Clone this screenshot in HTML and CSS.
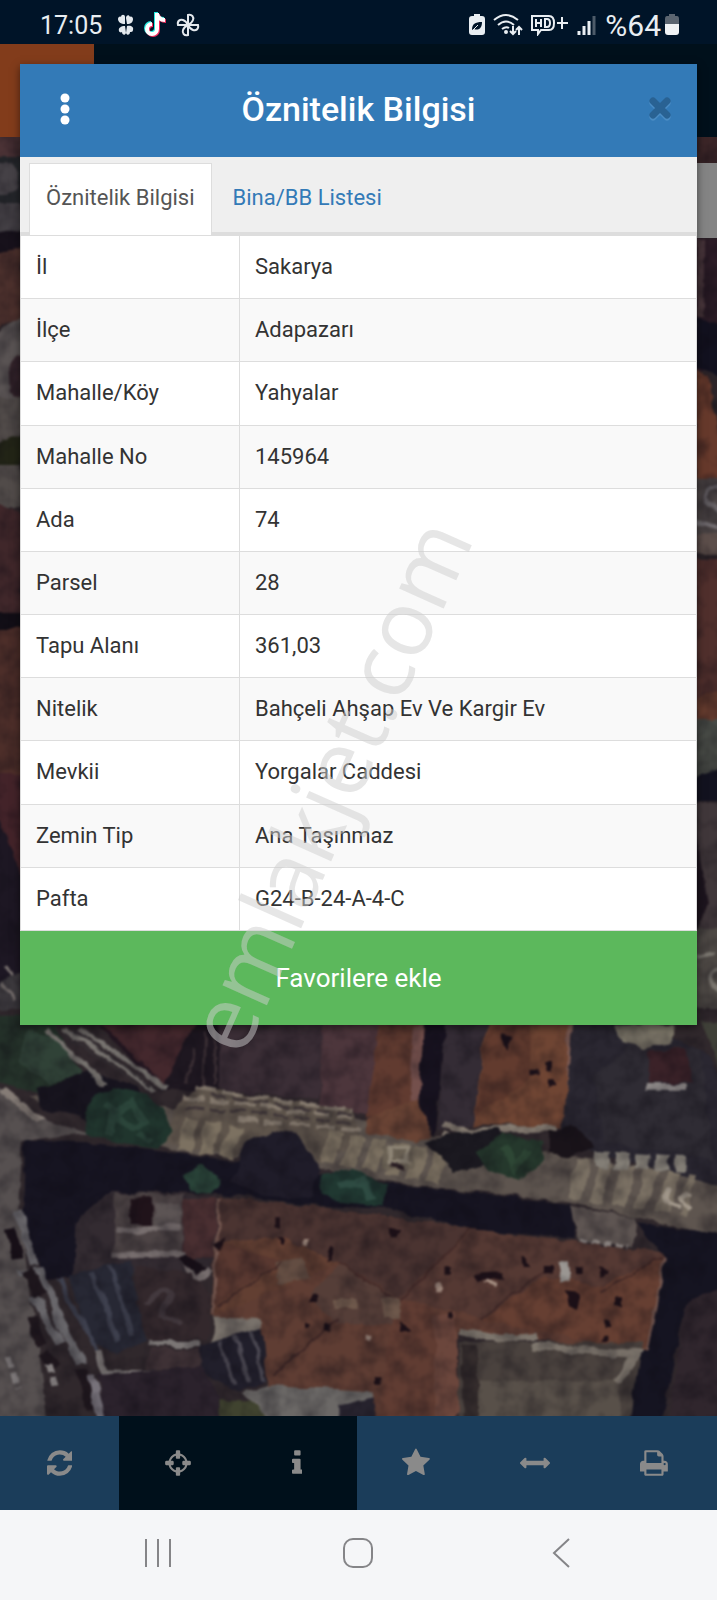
FILE: index.html
```html
<!DOCTYPE html>
<html lang="tr">
<head>
  <meta charset="UTF-8">
  <meta name="viewport" content="width=device-width, initial-scale=1.0">
  <title>Öznitelik Bilgisi</title>
  <link rel="stylesheet" href="styles.css">
</head>
<body>
  <!-- Status Bar -->
  <header class="status-bar">
    <div class="status-group">
      <span class="clock">17:05</span>
      <svg width="20" height="24" viewBox="0 0 20 24" fill="#e4e9ee">
        <path d="M9 11C5 11 2 9 2 6c0-2 2-3 3-2 0-3 4-3 4 0zM11 11c4 0 6-2 6-5 0-2-2-3-3-2-1-3-4-2-4 1zM9 13c-4 0-7 2-6 5 0 1 2 2 3 1 0 3 3 4 4 1zM11 13c4-1 7 1 6 4 0 2-2 2-3 2 0 3-3 4-4 1z"/>
      </svg>
      <svg width="24" height="28" viewBox="0 0 24 28" fill="none" stroke-width="4">
        <path d="M13 2v16a5 5 0 1 1-5-5M13 3c1 4 4 6 8 6" stroke="#25e8df" transform="translate(-1 -1)"/>
        <path d="M13 2v16a5 5 0 1 1-5-5M13 3c1 4 4 6 8 6" stroke="#f02c5c" transform="translate(1 1)"/>
        <path d="M13 2v16a5 5 0 1 1-5-5M13 3c1 4 4 6 8 6" stroke="#fff"/>
      </svg>
      <svg width="24" height="24" viewBox="0 0 24 24" fill="none" stroke="#e4e9ee" stroke-width="2">
        <path d="M12 12V2c4-1 6 2 5 5-1 3-3 4-5 5zM12 12h10c1 4-2 6-5 5-3-1-4-3-5-5zM12 12v10c-4 1-6-2-5-5 1-3 3-4 5-5zM12 12H2C1 8 4 6 7 7c3 1 4 3 5 5z"/>
      </svg>
    </div>
    <div class="status-group">
      <svg width="16" height="22" viewBox="0 0 16 22">
        <path d="M5 0h6v2h2q3 0 3 3v13q0 3-3 3H3q-3 0-3-3V5q0-3 3-3h2z" fill="#e9eef2"/>
        <path d="M3 16c0-6 3-8 10-8 0 6-3 9-8 7z" fill="#001428"/>
        <path d="M4 16l5-5" stroke="#e9eef2"/>
      </svg>
      <svg width="30" height="24" viewBox="0 0 30 24" fill="none" stroke="#e9eef2" stroke-width="2">
        <path d="M1 7Q13-3 25 7M5 12q8-7 16 0M9 16q4-3 7-1"/>
        <circle cx="13" cy="19" r="1"/>
        <path d="M20 13v8M17 18l3 3 3-3M26 22v-8M23 17l3-3 3 3"/>
      </svg>
      <svg width="38" height="22" viewBox="0 0 38 22" fill="none" stroke="#e9eef2" stroke-width="2">
        <path d="M1 2h17q5 0 5 7t-5 7h-8l-3 4v-4H1z"/>
        <path d="M5 5v8M10 5v8M5 9h5M14 5v8h2q3 0 3-4t-3-4zM26 9h11M31 3v12" stroke-width="2"/>
      </svg>
      <svg width="20" height="22" viewBox="0 0 20 22" stroke="#e9eef2" stroke-width="3">
        <path d="M2 17v4M7 12v9M12 7v14"/>
        <path d="M17 2v19" stroke="#4d5b69"/>
      </svg>
      <span class="battery-text">%64</span>
      <svg width="14" height="22" viewBox="0 0 14 22">
        <path d="M4 0h6v2h2q2 0 2 3v5H0V5q0-3 2-3h2z" fill="#5b6570"/>
        <path d="M0 10h14v8q0 3-3 3H3q-3 0-3-3z" fill="#f0f3f5"/>
      </svg>
    </div>
  </header>

  <main class="stage">
    <!-- App behind the dialog -->
    <div class="app-header"><div class="app-logo"></div></div>
    <div class="map">
      <svg class="map-image" viewBox="0 137 717 1280" preserveAspectRatio="xMidYMax slice">
        <defs>
          <!-- roughens the edges and adds a little mottling -->
          <filter id="aerial" x="0" y="0" width="100%" height="100%" color-interpolation-filters="sRGB">
            <feTurbulence type="fractalNoise" baseFrequency="0.05" numOctaves="3" seed="4" result="noise"/>
            <feDisplacementMap in="SourceGraphic" in2="noise" scale="9" xChannelSelector="R" yChannelSelector="G" result="rough"/>
            <feColorMatrix in="noise" type="matrix" values="0 0 0 0 0.05  0 0 0 0 0.04  0 0 0 0 0.07  0.8 0 0 0 -0.3" result="mottle"/>
            <feMerge result="merged">
              <feMergeNode in="rough"/>
              <feMergeNode in="mottle"/>
            </feMerge>
            <feGaussianBlur in="merged" stdDeviation="1.2"/>
          </filter>
        </defs>
        <rect y="137" width="717" height="1280" fill="#2c2428"/>
        <g filter="url(#aerial)">
          <rect x="-20" y="117" width="757" height="1320" fill="#2c2428"/>
          <!-- left edge -->
          <rect x="-10" y="127" width="32" height="30" fill="#4b3235"/>
          <rect x="-10" y="157" width="32" height="76" fill="#24262a"/>
          <path d="M-10 165h22l8 20-12 10h-18zM-10 205h32v30h-32z" fill="#454146"/>
          <path d="M-10 236l32-6v20l-32 6z" fill="#17111b"/>
          <path d="M-10 256l32-6v70l-32 14z" fill="#4c302c"/>
          <path d="M-10 340l32-22v80h-32z" fill="#595353"/>
          <path d="M10 360l12-4v46l-10-8z" fill="#35242b"/>
          <path d="M-10 398h32v110h-32z" fill="#514b49"/>
          <path d="M-10 445l32-8v30h-32z" fill="#222416"/>
          <path d="M-10 500l32 15v100h-32z" fill="#40272a"/>
          <path d="M-10 614h32v16h-32z" fill="#120e16"/>
          <path d="M-10 630h32v145h-32z" fill="#4d2e29"/>
          <path d="M-10 775h32v105l-32-80z" fill="#432329"/>
          <path d="M-10 800l32 80v150h-32z" fill="#1d1723"/>
          <path d="M-10 990l32-20v60h-32z" fill="#3c393d"/>
          <path d="M3 967l9 9M2 985l13 17" stroke="#77706e" stroke-width="3"/>
          <!-- right edge -->
          <rect x="695" y="127" width="32" height="40" fill="#3b2527"/>
          <path d="M695 238h32v135h-32z" fill="#2c1c26"/>
          <path d="M697 240h8v78h-8z" fill="#49363b"/>
          <path d="M695 318l32 8v55l-32-12z" fill="#12111f"/>
          <path d="M695 370l14 10 18 100h-32z" fill="#66392b"/>
          <path d="M695 480h32v60h-32z" fill="#4c4545"/>
          <path d="M722 488q-20 4-12 18l12 8M695 522l30 10" stroke="#777275" stroke-width="4" fill="none"/>
          <path d="M695 535h32v20h-32z" fill="#5c4e4a"/>
          <path d="M695 560h32v160h-32z" fill="#502f2c"/>
          <path d="M695 700l32-8v30h-32z" fill="#633a2d"/>
          <path d="M695 720h32v60h-32z" fill="#474a45"/>
          <path d="M695 778l32-10v35h-32z" fill="#12121f"/>
          <path d="M695 805h32v125h-32z" fill="#40373a"/>
          <path d="M695 825l12 80-12 35z" fill="#1c141d"/>
          <path d="M695 930h32v120h-32z" fill="#4d4844"/>
          <path d="M722 970q-22 10 0 22M697 958l16-4" stroke="#79756e" stroke-width="4" fill="none"/>

          <!-- neighbourhood under the dialog -->
          <g transform="translate(0 1010) scale(.4573 .3333)">
            <path d="M-30 0h1628v1270H-30z" fill="#30282c"/>
            <path d="M-30 210L70 320l130 50-150 25-10 200 70 675H-30z" fill="#565050"/>
            <path d="M60 260l330 170 210 20 260 70 380 60 358 105V510l-360-70-288-60-200-60-310-80-60 60z" fill="#5e554f"/>
            <path d="M-30 20h140l70 180-60 70L-30 210z" fill="#25332a"/>
            <path d="M60 60l80 40 40 100-70 20-70-60z" fill="#304237"/>
            <path d="M80 240l110-50 110 40 20 60-130 40-100-30z" fill="#17141e"/>
            <!-- upper roofs -->
            <path d="M210 30h225l-15 160-60 45z" fill="#44282d"/>
            <path d="M220 50l140 185" stroke="#241721" stroke-width="10"/>
            <path d="M435 30h45v220h-80l-50-10z" fill="#1e1720"/>
            <path d="M425 120l-20 110M450 70l-5 170M470 60v170" stroke="#3c3035" stroke-width="6"/>
            <path d="M480 30h230l-12 240-218-30z" fill="#3b2e36"/>
            <path d="M705 30h125l-12 290-118-30z" fill="#4d363c"/>
            <path d="M830 30h100l-12 300-118-5z" fill="#613b30"/>
            <path d="M905 50h22l-10 230h-22z" fill="#74504c"/>
            <path d="M800 330l115-60 35 110-40 20-110-30z" fill="#694334"/>
            <path d="M928 30h45l-20 350-38-100z" fill="#17121f"/>
            <path d="M972 30h100l-30 310-85 30z" fill="#342c35"/>
            <path d="M1065 30h185v330l-215-15z" fill="#6f4533"/>
            <path d="M1065 60l95-10v160l-120 110z" fill="#623b2e"/>
            <path d="M1238 50h14v310h-14z" fill="#7b5a52"/>
            <path d="M1095 75l30 8-16 40zM1160 182h18v20h-18zM1195 162h14v22h-14zM1196 208h16v24h-16z" fill="#1c1119"/>
            <path d="M1250 30h140l150 100 58 110v300l-310-115-60 10z" fill="#2a2731"/>
            <path d="M1300 200l80-90 150 10 30 330-240-50z" fill="#2f2c34"/>
            <path d="M1420 120h80l20 100h-105z" fill="#3b2228"/>
            <path d="M1345 45h125v60h-40l-18 15-52-15z" fill="#7d7769"/>
            <path d="M1410 232h92" stroke="#8d8887" stroke-width="20"/>
            <path d="M1530 40h68v220z" fill="#3f4038"/>

            <!-- balconies and stairs -->
            <path d="M100 60l130 170M140 55l200 190M175 60l190 175" stroke="#77736f" stroke-width="13" fill="none"/>
            <path d="M120 55l190 180M160 60l170 170" stroke="#332d31" stroke-width="6" fill="none"/>
            <path d="M0 240l90 95" stroke="#857c76" stroke-width="20"/>
            <path d="M390 280l50-40 330 60 20 90-90 70-150-15-190-45z" fill="#5e544b"/>
            <path d="M400 265l370 60M430 240l340 65M520 330l270 35" stroke="#857a6e" stroke-width="13" stroke-dasharray="45 12"/>
            <path d="M410 290l370 55M460 260l310 60" stroke="#3f3638" stroke-width="7" stroke-dasharray="35 12"/>
            <path d="M395 375l140 30M710 410l260 65" stroke="#7c7161" stroke-width="95" stroke-dasharray="32 16"/>
            <path d="M835 410h70v65h-70z" fill="#6a6154"/>
            <path d="M850 415h40v40h-40z" fill="none" stroke="#8d8475" stroke-width="10"/>
            <path d="M850 462l35 10" stroke="#281c22" stroke-width="12"/>
            <path d="M970 350l60 15 190-5M980 375l-20 30" stroke="#887e73" stroke-width="20" fill="none"/>
            <path d="M1250 510l260 50" stroke="#7a7063" stroke-width="125" stroke-dasharray="30 20"/>
            <path d="M1300 450l200 15" stroke="#837e76" stroke-width="48" stroke-dasharray="32 12"/>
            <path d="M1465 540q-30 40 20 60M1510 550q-40 20-5 50" stroke="#a2988b" stroke-width="13" fill="none"/>

            <!-- street shadow -->
            <path d="M55 395l135 5 150 25 200 35 160 35 160 30 385 60 10 105-225-30-190-60-140-10-220-35-230-5-80 105-10 150-60 5-50-165z" fill="#161421"/>
            <path d="M1390 640l208 36v170l-100 50-55 374h-75l75-534z" fill="#151421"/>
            <path d="M1245 590l145 35-8 90-120-20z" fill="#5e5552"/>
            <path d="M1270 695l105 18" stroke="#918985" stroke-width="12" stroke-dasharray="16 10"/>

            <!-- trees -->
            <path d="M195 270l60-35 70 20 35 55 15 60-30 50-80-15-80-35z" fill="#20352d"/>
            <path d="M230 280l30 30 25-30 30 60-30 15-35-35-10 60M300 370l35 25" stroke="#2b453a" stroke-width="18" fill="none"/>
            <path d="M540 400l50-35 60 10 45 90-10 105-110-10-70-40z" fill="#1f1c29"/>
            <path d="M700 495l70-15 80 50-15 65-100-15-30-30z" fill="#203831"/>
            <path d="M735 535l60-20 15 55" stroke="#2e4b42" stroke-width="22" fill="none"/>
            <path d="M400 500l40-30 45 45-25 40-45-10z" fill="#294338"/>
            <path d="M930 400l70-30 90-10 30 90-130 45-15-40z" fill="#1b1920"/>
            <path d="M1040 430l60-55 85 20 5 60-60 60-60-30z" fill="#25382c"/>
            <path d="M1100 410l25 70 30-60" stroke="#2e4735" stroke-width="20" fill="none"/>
            <path d="M1200 370l60-15 40 60-60 30-40-10z" fill="#191319"/>

            <!-- lower left houses -->
            <path d="M165 640l80-95 230 20-5 220-310 15z" fill="#332b31"/>
            <path d="M250 550l150 10v170l-150 20z" fill="#4d4445"/>
            <path d="M285 565h45v80h-40z" fill="#20131a"/>
            <path d="M335 580h60v70l-60 20z" fill="#5c5454"/>
            <path d="M400 570h75l-8 175-65 5z" fill="#4a2f31"/>
            <path d="M255 665l40 5 20-15 80 5M250 740l150-5 30 80 30-30" stroke="#776e6e" stroke-width="18" fill="none"/>
            <path d="M400 740l40 50M20 660l20 90" stroke="#170f17" stroke-width="24"/>
            <path d="M150 800l130-45 45 240-70 40-60-40z" fill="#272834"/>
            <path d="M200 790l60 210M240 770l50 210M130 810l90 240" stroke="#3e404e" stroke-width="11"/>
            <path d="M290 775l130 15 40 70-10 130-130 5z" fill="#33282c"/>
            <path d="M320 880q30-60 55-20l-20 60 40 20" stroke="#43393e" stroke-width="16" fill="none"/>
            <path d="M465 925h115l-10 50-110 40z" fill="#79726b"/>
            <path d="M325 1005h115M215 1030l15 60 150 5" stroke="#7b7675" stroke-width="18" fill="none"/>
            <path d="M330 1020h110v60H320z" fill="#3e3135"/>
            <path d="M440 1010l140-60 10 160-70 40-80-60z" fill="#211f2b"/>
            <path d="M480 1000l35 130M515 980l30 140M550 965l25 150" stroke="#4b4852" stroke-width="9"/>
            <path d="M40 600l35 170M40 790l50-5 50 180 40 100M75 860l60 150" stroke="#69676b" stroke-width="20" fill="none"/>
            <path d="M60 780l30 80M70 920l20 90M180 1080l20 120M95 1030l25 40" stroke="#1f171d" stroke-width="26"/>
            <path d="M20 1050l20 90M105 1060l15 70" stroke="#878282" stroke-width="15" stroke-dasharray="30 15"/>
            <path d="M215 1095l225-20 90 195H230z" fill="#2b222c"/>
            <path d="M200 1100l25 150" stroke="#77727a" stroke-width="18"/>
            <path d="M480 1170l120 10v90H480z" fill="#40432f"/>
            <path d="M530 1150l70-30 230 30-20 120H610z" fill="#6b6866"/>
            <path d="M740 1190l90-30v110h-90z" fill="#28242f"/>

            <!-- lower roofs -->
            <path d="M480 565l220 30 330 65 425 75-40 295-415-65-10 305H830l-15-120-230-20-15-200-105-5z" fill="#5f3d33"/>
            <path d="M480 565l220 30 330 65-160 210-130-110-265 135z" fill="#4b3431"/>
            <path d="M470 700l150-15 120 75-280 165z" fill="#623f32"/>
            <path d="M465 895l150-140-140-60z" fill="#593830"/>
            <path d="M740 765l130 105-15 80-120-10-60-80z" fill="#553e38"/>
            <path d="M600 760l60-15 20 60-70 20z" fill="#634d42"/>
            <path d="M1030 660l425 75-140 110-260 85-80-30-105-30z" fill="#553933"/>
            <path d="M1190 800l120 30 145-90-40 290-360-100z" fill="#663f32"/>
            <path d="M870 870l70 30 60 50-45 320H830l20-290z" fill="#603c32"/>
            <path d="M950 920l45-10 10 300-55 60z" fill="#6b463c"/>
            <path d="M1030 660L870 880M740 760l130 120M1190 785l-140 145M1455 740l-140 105M740 930L600 1100M475 895l140-135" stroke="#432a28" stroke-width="5"/>
            <path d="M480 570l-15 350M1455 740l-40 290" stroke="#755850" stroke-width="7"/>
            <path d="M600 625h12v28h-12zM850 650l25 10-8 25h-15zM720 710l12 8-8 32h-10zM470 700l26-15-15 35zM610 685h8v25h-8zM680 860h14v16h-14zM715 945h12v20h-12zM665 945h12v14h-12zM875 940l25 30-28 5zM1140 735l18 45h-15zM1185 765h20v25h-20zM1260 775h14v20h-14zM1310 775l22 10-18 22zM1345 865h15v30h-15zM1235 850l35 5-8 50-20-10zM1322 935h14v22h-14zM1315 980h11v16h-11zM970 775h14v22h-14zM1035 795l60-5 10 20-60 10zM820 1105h14v22h-14zM978 910h10v16h-10z" fill="#1c1017"/>
            <path d="M1218 760h24l4 60-18 6z" fill="#9a9692"/>
            <path d="M1060 820l25 15M960 820v30M670 690v20M808 980v16" stroke="#a48d80" stroke-width="12"/>
            <path d="M725 870h55v30h-50zM835 870h40v60h-35z" fill="#6e584b"/>
            <path d="M1005 1000h400l-30 270h-375z" fill="#4a423e"/>
            <path d="M1045 1115h310v155h-310z" fill="#585049"/>
            <path d="M1010 1010h35v260h-30z" fill="#342c2c"/>
            <path d="M1005 965l90 25 80-10M1160 1010l230 25-40 90" stroke="#7d756c" stroke-width="24" fill="none"/>
            <path d="M1500 880l98-60v450h-140z" fill="#30262d"/>
          </g>
        </g>
      </svg>
      <div class="map-widget"></div>
    </div>

    <nav class="toolbar">
      <button aria-label="Yenile"><svg viewBox="0 0 1536 1792"><path d="M1511 1056q0 5-1 7-64 268-268 434.500T764 1664q-146 0-282.500-55T238 1452l-129 129q-19 19-45 19t-45-19-19-45v-448q0-26 19-45t45-19h448q26 0 45 19t19 45-19 45l-137 137q71 66 161 102t187 36q134 0 250-65t186-179q11-17 53-117 8-23 30-23h192q13 0 22.500 9.500t9.500 22.500zm25-800v448q0 26-19 45t-45 19h-448q-26 0-45-19t-19-45 19-45l138-138Q969 384 768 384q-134 0-250 65T332 628q-11 17-53 117-8 23-30 23H50q-13 0-22.500-9.500T18 736v-7q65-268 270-434.500T768 128q146 0 284 55.500T1297 340l130-129q19-19 45-19t45 19 19 45z"/></svg></button>
      <button class="dark" aria-label="Konum"><svg viewBox="0 0 1792 1792"><path d="M1325 1024h-109q-26 0-45-19t-19-45v-128q0-26 19-45t45-19h109q-32-108-112.500-188.500T1024 467v109q0 26-19 45t-45 19H832q-26 0-45-19t-19-45V467q-108 32-188.500 112.500T467 768h109q26 0 45 19t19 45v128q0 26-19 45t-45 19H467q32 108 112.500 188.500T768 1325v-109q0-26 19-45t45-19h128q26 0 45 19t19 45v109q108-32 188.500-112.500T1325 1024zm339-192v128q0 26-19 45t-45 19h-143q-37 161-154.500 278.500T1024 1457v143q0 26-19 45t-45 19H832q-26 0-45-19t-19-45v-143q-161-37-278.500-154.500T335 1024H192q-26 0-45-19t-19-45V832q0-26 19-45t45-19h143q37-161 154.500-278.500T768 335V192q0-26 19-45t45-19h128q26 0 45 19t19 45v143q161 37 278.500 154.500T1457 768h143q26 0 45 19t19 45z"/></svg></button>
      <button class="dark" aria-label="Bilgi"><svg viewBox="0 0 640 1792"><path d="M640 1344v128q0 26-19 45t-45 19H64q-26 0-45-19t-19-45v-128q0-26 19-45t45-19h64V896H64q-26 0-45-19t-19-45V704q0-26 19-45t45-19h384q26 0 45 19t19 45v576h64q26 0 45 19t19 45zM512 192v192q0 26-19 45t-45 19H192q-26 0-45-19t-19-45V192q0-26 19-45t45-19h256q26 0 45 19t19 45z"/></svg></button>
      <button aria-label="Favoriler"><svg viewBox="0 0 1664 1792"><path d="M1664 647q0 22-26 48l-363 354 86 500q1 7 1 20 0 21-10.500 35.500T1321 1619q-19 0-40-12l-449-236-449 236q-22 12-40 12-21 0-31.500-14.500T301 1569q0-6 2-20l86-500L25 695Q0 668 0 647q0-37 56-46l502-73L783 73q19-41 49-41t49 41l225 455 502 73q56 9 56 46z"/></svg></button>
      <button aria-label="Ölçüm"><svg viewBox="0 0 1792 1792"><path d="M1792 896q0 26-19 45l-256 256q-19 19-45 19t-45-19-19-45v-128H384v128q0 26-19 45t-45 19-45-19L19 941q-19-19-19-45t19-45l256-256q19-19 45-19t45 19 19 45v128h1024V640q0-26 19-45t45-19 45 19l256 256q19 19 19 45z"/></svg></button>
      <button aria-label="Yazdır"><svg viewBox="0 0 1664 1792"><path d="M384 1536h896v-256H384v256zm0-640h896V512h-160q-40 0-68-28t-28-68V256H384v640zm1152 64q0-26-19-45t-45-19-45 19-19 45 19 45 45 19 45-19 19-45zm128 0v416q0 13-9.500 22.500t-22.500 9.500h-224v160q0 40-28 68t-68 28H352q-40 0-68-28t-28-68v-160H32q-13 0-22.500-9.500T0 1376V960q0-79 56.500-135.500T192 768h64V224q0-40 28-68t68-28h672q40 0 88 20t76 48l152 152q28 28 48 76t20 88v256h64q79 0 135.500 56.500T1664 960z"/></svg></button>
    </nav>

    <!-- Dialog -->
    <section class="modal" role="dialog" aria-labelledby="modal-title">
      <div class="modal-header">
        <button class="menu-btn" aria-label="Menü">
          <svg width="10" height="32" viewBox="0 0 10 32" fill="#fff"><circle cx="5" cy="5" r="4.500"/><circle cx="5" cy="16" r="4.500"/><circle cx="5" cy="27" r="4.500"/></svg>
        </button>
        <h1 id="modal-title">Öznitelik Bilgisi</h1>
        <button class="close-btn" aria-label="Kapat">
          <svg width="24" height="26" viewBox="0 0 24 26" stroke-width="7" stroke-linecap="round"><path d="M5 7l14 14M19 7L5 21" stroke="#4a8cc4"/><path d="M5 5l14 14M19 5L5 19" stroke="#296293"/></svg>
        </button>
      </div>
      <nav class="tabs">
        <a class="tab active" href="#oznitelik">Öznitelik Bilgisi</a>
        <a class="tab" href="#bina">Bina/BB Listesi</a>
      </nav>
      <table class="info-table" id="oznitelik">
        <tr><th scope="row">İl</th><td>Sakarya</td></tr>
        <tr><th scope="row">İlçe</th><td>Adapazarı</td></tr>
        <tr><th scope="row">Mahalle/Köy</th><td>Yahyalar</td></tr>
        <tr><th scope="row">Mahalle No</th><td>145964</td></tr>
        <tr><th scope="row">Ada</th><td>74</td></tr>
        <tr><th scope="row">Parsel</th><td>28</td></tr>
        <tr><th scope="row">Tapu Alanı</th><td>361,03</td></tr>
        <tr><th scope="row">Nitelik</th><td>Bahçeli Ahşap Ev Ve Kargir Ev</td></tr>
        <tr><th scope="row">Mevkii</th><td>Yorgalar Caddesi</td></tr>
        <tr><th scope="row">Zemin Tip</th><td>Ana Taşınmaz</td></tr>
        <tr><th scope="row">Pafta</th><td>G24-B-24-A-4-C</td></tr>
      </table>
      <button class="favorite-btn">Favorilere ekle</button>
    </section>
  </main>

  <!-- Phone Navigation -->
  <nav class="phone-nav">
    <button aria-label="Son uygulamalar"><svg width="32" height="32" viewBox="0 0 32 32"><path d="M4 2v28M16 2v28M28 2v28"/></svg></button>
    <button aria-label="Ana ekran"><svg width="32" height="32" viewBox="0 0 32 32"><rect x="2" y="2" width="28" height="28" rx="9"/></svg></button>
    <button aria-label="Geri"><svg width="32" height="32" viewBox="0 0 32 32"><path d="M26 2L11 16l15 14"/></svg></button>
  </nav>

  <!-- Watermark -->
  <svg class="watermark" viewBox="0 0 717 1600" aria-hidden="true">
    <text x="243" y="1059" transform="rotate(-66 243 1059)">emlakjet.com</text>
  </svg>
</body>
</html>
```
FILE: styles.css
```css
/* General Styles */
* {
  box-sizing: border-box;
}

body {
  font-family: Roboto, 'Liberation Sans', sans-serif;
  font-size: 22px;
  color: #333;
  margin: 0;
  min-height: 100vh;
  display: flex;
  flex-direction: column;
  position: relative;
}

button {
  font-family: inherit;
  border: none;
  padding: 0;
  background: none;
  cursor: pointer;
  display: flex;
  justify-content: center;
  align-items: center;
}

svg {
  display: block;
}

/* Status Bar */
.status-bar {
  height: 44px;
  padding: 6px 38px 0 40px;
  background: #001428;
  color: #e9eef2;
  display: flex;
  justify-content: space-between;
  align-items: center;
}

.status-group {
  display: flex;
  align-items: center;
  gap: 8px;
}

.clock {
  font-size: 25px;
  margin-right: 6px;
}

.battery-text {
  font-size: 30px;
  margin-right: -4px;
}

/* App */
.stage {
  flex: 1;
  display: flex;
  flex-direction: column;
  position: relative;
}

.app-header {
  height: 93px;
  background: #00101b;
}

.app-logo {
  width: 94px;
  height: 100%;
  background: #823c1b;
}

.map {
  flex: 1 0 1000px;
  position: relative;
  overflow: hidden;
}

.map-image {
  position: absolute;
  width: 100%;
  height: 100%;
}

.map-widget {
  position: absolute;
  top: 26px;
  right: 0;
  width: 40px;
  height: 75px;
  background: #848484;
}

/* Toolbar */
.toolbar {
  height: 94px;
  padding-right: 4px;
  display: grid;
  grid-template-columns: repeat(6, 1fr);
  background: #1b3d5a;
}

.toolbar .dark {
  background: #00101b;
}

.toolbar svg {
  height: 30px;
  fill: #8a8a8a;
}

/* Modal */
.modal {
  position: absolute;
  top: 20px;
  left: 20px;
  right: 20px;
  background: #fff;
  box-shadow: 0 3px 8px rgba(0, 0, 0, 0.5);
}

.modal-header {
  display: grid;
  grid-template-columns: 66px 1fr 66px;
  align-items: center;
  height: 93px;
  padding: 0 12px 4px;
  background: #337ab7;
}

.modal-header h1 {
  margin: 0;
  font-size: 34px;
  font-weight: 500;
  text-align: center;
  color: #fff;
}

.close-btn {
  justify-self: end;
  width: 50px;
}

/* Tabs */
.tabs {
  display: flex;
  gap: 4px;
  padding: 6px 9px 0;
  background: #efefef;
  box-shadow: inset 0 -3px 0 #ddd;
}

.tab {
  padding: 18px 16px 22px;
  line-height: 31px;
  border: 1px solid transparent;
  border-bottom: none;
  color: #337ab7;
  text-decoration: none;
}

.tab.active {
  background: #fff;
  border-color: #ddd;
  color: #555;
}

/* Info Table */
.info-table {
  width: 100%;
  height: 696px;
  border-collapse: collapse;
  line-height: 30px;
}

.info-table th,
.info-table td {
  padding: 14px 15px;
  border: 1px solid #ddd;
  font-weight: normal;
  text-align: left;
}

.info-table th {
  width: 219px;
}

.info-table tr:nth-child(even) {
  background: #f9f9f9;
}

.favorite-btn {
  width: 100%;
  height: 94px;
  background: #5cb85c;
  color: #fff;
  font-size: 26px;
}

/* Phone Navigation */
.phone-nav {
  height: 90px;
  padding: 0 58px 4px;
  display: grid;
  grid-template-columns: repeat(3, 1fr);
  background: #f5f6f8;
}

.phone-nav svg {
  fill: none;
  stroke: #858588;
  stroke-width: 2;
}

/* Watermark */
.watermark {
  position: absolute;
  top: 0;
  left: 0;
  width: 100%;
  pointer-events: none;
}

.watermark text {
  font-family: 'Open Sans', sans-serif;
  font-size: 91px;
  fill: rgba(205, 205, 205, 0.5);
}
```
